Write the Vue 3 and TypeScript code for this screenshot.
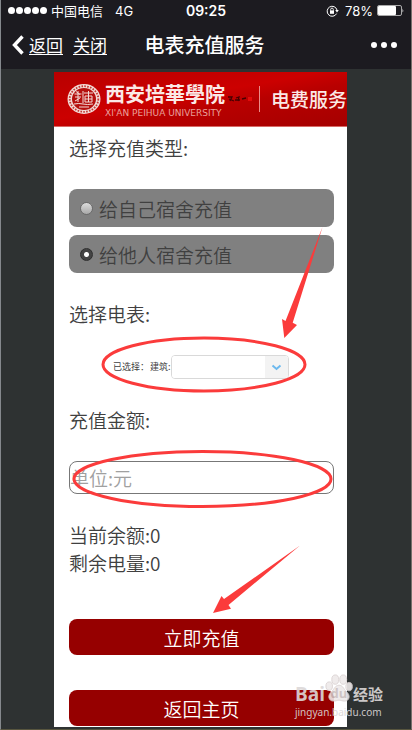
<script setup lang="ts">
import { ref } from 'vue'

interface RechargeTarget {
  value: string
  label: string
}

const targets: RechargeTarget[] = [
  { value: 'self', label: '给自己宿舍充值' },
  { value: 'other', label: '给他人宿舍充值' },
]

const target = ref('other')
const building = ref('')
const amount = ref('')
const balance = ref(0)
const remaining = ref(0)
</script>

<template>
  <div class="phone">
    <header class="top">
      <div class="status">
        <div class="carrier">
          <span class="signal"><i v-for="n in 5" :key="n"></i></span>
          <span>中国电信</span>
          <span class="network">4G</span>
        </div>
        <strong class="clock">09:25</strong>
        <div class="power">
          <svg class="lock" viewBox="0 0 13 12" aria-hidden="true">
            <path d="M10.6 8.6A5 5 0 1 1 11 5" fill="none" stroke="#fff" stroke-width="1" />
            <path d="M9.2 5h3.6L11 7.4z" fill="#fff" />
            <path d="M4 5.4h4v3.4H4z" fill="#fff" />
            <path d="M4.7 5.6V4.4a1.3 1.3 0 0 1 2.6 0v1.2" fill="none" stroke="#fff" stroke-width=".9" />
          </svg>
          <span>78%</span>
          <svg class="battery" viewBox="0 0 27 11" aria-hidden="true">
            <rect x=".5" y=".5" width="24" height="10" rx="1.5" fill="none" stroke="#aaa" />
            <rect x="1" y="1" width="18" height="9" rx="1" fill="#fff" />
            <path d="M25.5 3.5q1.5 2 0 4z" fill="#ddd" />
          </svg>
        </div>
      </div>
      <nav class="nav">
        <div class="links">
          <svg class="back" viewBox="0 0 12 20" aria-hidden="true">
            <path d="M10.5 1.5L2.5 10l8 8.5" fill="none" stroke="#fff" stroke-width="3.4" />
          </svg>
          <a href="#back">返回</a>
          <a href="#close">关闭</a>
        </div>
        <h1>电表充值服务</h1>
        <button class="more" type="button" aria-label="更多"><i></i><i></i><i></i></button>
      </nav>
    </header>

    <main class="stage">
      <form class="page" @submit.prevent>
        <div class="banner">
          <svg class="seal" viewBox="0 0 34 32" aria-hidden="true">
            <ellipse cx="17" cy="16" rx="16.5" ry="15" fill="#f3dcd8" />
            <ellipse cx="17" cy="16" rx="14.3" ry="12.8" fill="none" stroke="#c33a35" stroke-width="1.8" stroke-dasharray="1.6 1.3" />
            <ellipse cx="17" cy="16" rx="12" ry="11" fill="#b5100e" />
            <path
              d="M7.5 11h7M8 14h6M11 8v11M8 18l5-3M9 8.500l4 3M17 10h9M18 13h7v6h-7zM18 16h7M21.500 8v11M16 8v12M7 21q5-1 9 0t10 0M12 24h10"
              fill="none"
              stroke="#f3dcd8"
              stroke-width="1"
            />
          </svg>
          <div class="school">
            <span class="cn">西安培華學院</span>
            <span class="en">XI'AN PEIHUA UNIVERSITY</span>
          </div>
          <svg class="campus" viewBox="0 0 26 6" aria-hidden="true">
            <path d="M1 1l4 0-2 4M2 3l5 2M9 2l3-1-1 4M8 4h5M15 3l4-1" fill="none" stroke="#450000" stroke-width="1.3" />
            <path d="M21 1h4v4h-4z" fill="#e20b0b" />
          </svg>
          <span class="service">电费服务</span>
        </div>

        <fieldset class="section">
          <legend>选择充值类型:</legend>
          <div class="options">
            <label v-for="item in targets" :key="item.value" class="option">
              <input v-model="target" type="radio" name="target" :value="item.value" />
              <span>{{ item.label }}</span>
            </label>
          </div>
        </fieldset>

        <section class="section">
          <h2>选择电表:</h2>
          <div class="meter">
            <span>已选择：</span>
            <label for="building">建筑:</label>
            <span class="picker">
              <select id="building" v-model="building">
                <option value=""></option>
              </select>
              <svg viewBox="0 0 23 22" aria-hidden="true">
                <path d="M7.500 9.500l4 3.500 4-3.500" fill="none" stroke="#6db9ee" stroke-width="2" />
              </svg>
            </span>
          </div>
        </section>

        <section class="section">
          <label class="title" for="amount">充值金额:</label>
          <input id="amount" v-model="amount" class="amount" type="text" placeholder="单位:元" />
        </section>

        <section class="account">
          <p>当前余额:{{ balance }}</p>
          <p>剩余电量:{{ remaining }}</p>
        </section>

        <div class="actions">
          <button type="submit">立即充值</button>
          <button type="button">返回主页</button>
        </div>
      </form>
    </main>

    <svg class="marks" width="412" height="730" viewBox="0 0 412 730" aria-hidden="true">
      <g fill="none" stroke="#fb3b3b" stroke-width="3">
        <ellipse cx="204" cy="364.500" rx="101" ry="26.500" />
        <ellipse cx="202.500" cy="479" rx="128.500" ry="27.500" />
      </g>
      <g fill="#fb3b3b">
        <path d="M322.500 227L285.500 321 282 319l2.300 19L297 325l-4.300-2.300z" />
        <path d="M300 545.500L224 599l-2.500-3L213 613l18-4.300-2.500-3.700z" />
      </g>
    </svg>

    <div class="watermark">
      <div class="brand">
        <span class="latin">Bai</span>
        <span class="paw">
          <svg viewBox="0 0 30 30" aria-hidden="true">
            <g fill="currentColor" stroke="#d8d0d0" stroke-width="1">
              <ellipse cx="4.500" cy="13" rx="3.500" ry="4.500" />
              <ellipse cx="11" cy="6" rx="3.700" ry="5" />
              <ellipse cx="19.500" cy="6" rx="3.700" ry="5" />
              <ellipse cx="25.800" cy="13.500" rx="3.500" ry="4.500" />
              <path d="M15 12c4 0 5 4 8 7 5 4 3 10-2 10-3 0-4-1-6-1s-3 1-6 1c-5 0-7-6-2-10 3-3 4-7 8-7z" />
            </g>
          </svg>
          <span>du</span>
        </span>
        <span class="jy">经验</span>
      </div>
      <div class="site">jingyan.baidu.com</div>
    </div>
  </div>
</template>

<style>
body {
  margin: 0;
}
</style>

<style scoped>
.phone {
  position: relative;
  box-sizing: border-box;
  min-height: 100vh;
  overflow: hidden;
  display: flex;
  flex-direction: column;
  border-left: 1px solid #85898d;
  border-right: 1px solid #77706c;
  border-bottom: 1px solid #58563f;
  background: #2e3232;
  color: #404040;
  font-family: "Noto Sans CJK SC", sans-serif;
  font-weight: 350;
}

.top {
  background: #1c1b20;
  color: #fff;
  font-weight: 400;
}

.status,
.nav {
  display: grid;
  grid-template-columns: 1fr auto 1fr;
  align-items: center;
}

.status {
  height: 21px;
  padding: 0 7px;
  font-size: 13px;
  line-height: 20px;
}

.carrier,
.power {
  display: flex;
  align-items: center;
}

.carrier {
  gap: 4px;
}

.network {
  margin-left: 8px;
  font-family: Inter, sans-serif;
}

.signal {
  display: flex;
  gap: 1px;
}

.signal i {
  width: 7px;
  height: 7px;
  border-radius: 50%;
  background: #fff;
}

.clock {
  font-family: Inter, sans-serif;
  font-size: 14px;
  font-weight: 600;
}

.power {
  justify-content: flex-end;
  gap: 4px;
  font-family: Inter, sans-serif;
}

.lock {
  width: 13px;
  height: 12px;
  margin-right: 2px;
}

.battery {
  width: 27px;
  height: 11px;
}

.nav {
  height: 48px;
  padding: 0 14px 0 11px;
}

.links {
  display: flex;
  align-items: center;
}

.links a {
  color: #fff;
  font-size: 17px;
  line-height: 24px;
  text-underline-offset: 2px;
}

.links a + a {
  margin-left: 10px;
}

.back {
  width: 12px;
  height: 20px;
  margin-right: 5px;
}

.nav h1 {
  margin: 0;
  font-size: 20px;
  font-weight: 500;
  line-height: 28px;
}

.more {
  display: flex;
  gap: 4px;
  justify-self: end;
  padding: 8px 0;
  border: 0;
  background: none;
}

.more i {
  width: 6px;
  height: 6px;
  border-radius: 50%;
  background: #fff;
}

.stage {
  flex: 1;
  padding: 3px 64px 2px 53px;
}

.page {
  background: #fff;
  padding-bottom: 1px;
}

.banner {
  display: flex;
  align-items: center;
  box-sizing: border-box;
  height: 55px;
  padding-left: 13px;
  overflow: hidden;
  border-bottom: 1px solid #d76a66;
  background: linear-gradient(170deg, #b80000 0%, #cc0000 45%, #b80000 60%, #a50000 100%);
  color: #fbe9e6;
  white-space: nowrap;
}

.seal {
  flex: none;
  width: 34px;
  height: 32px;
}

.school {
  display: flex;
  flex-direction: column;
  width: 120px;
  margin-left: 4px;
}

.cn {
  font-size: 20px;
  font-weight: 700;
  line-height: 28px;
}

.en {
  color: #e9a09c;
  font-family: "DejaVu Sans", sans-serif;
  font-size: 9px;
  font-weight: 400;
  line-height: 10px;
}

.campus {
  flex: none;
  width: 26px;
  height: 6px;
  margin-left: 2px;
}

.service {
  margin-left: auto;
  padding-left: 11px;
  border-left: 1px solid #eb8c88;
  font-size: 19px;
  font-weight: 500;
  line-height: 26px;
}

.section,
.account,
.actions {
  margin: 0;
  padding: 0 13px 0 15px;
  border: 0;
  min-width: 0;
}

.section {
  padding-bottom: 27px;
}

.section legend,
.section h2,
.title,
.account p {
  display: block;
  margin: 0;
  padding: 0;
  font-size: 19px;
  font-weight: 350;
  line-height: 28px;
}

.section legend {
  padding-top: 7px;
}

.options {
  display: flex;
  flex-direction: column;
  gap: 8px;
  padding-top: 27px;
}

.option {
  display: flex;
  align-items: center;
  gap: 6px;
  height: 38px;
  padding-left: 11px;
  border-radius: 8px;
  background: #808080;
  font-size: 19px;
}

.option input {
  appearance: none;
  box-sizing: border-box;
  width: 13px;
  height: 13px;
  margin: 0;
  border: 1px solid #6a6a6a;
  border-radius: 50%;
  background: linear-gradient(#dcdcdc, #a8a8a8);
}

.option input:checked {
  border-color: #2e2e2e;
  background: radial-gradient(circle, #fff 0 2px, #444 3px);
}

.meter {
  display: flex;
  align-items: center;
  margin: 27px 0 0 44px;
  font-size: 9px;
  font-weight: 400;
  line-height: 24px;
}

.meter label {
  margin-left: 1px;
}

.picker {
  display: flex;
  position: relative;
  box-sizing: border-box;
  width: 118px;
  height: 24px;
  overflow: hidden;
  border: 1px solid #d9d9d9;
  border-radius: 4px;
}

.picker select {
  appearance: none;
  width: 100%;
  padding: 0 24px 0 4px;
  border: 0;
  background: #fff;
}

.picker svg {
  position: absolute;
  top: 0;
  right: 0;
  width: 23px;
  height: 22px;
  background: #f3f3f3;
  pointer-events: none;
}

.amount {
  box-sizing: border-box;
  display: block;
  width: 100%;
  height: 33px;
  margin-top: 27px;
  padding: 0;
  border: 1px solid #777;
  border-radius: 8px;
  background: #fff;
  color: #404040;
  font: inherit;
  font-size: 19px;
}

.amount::placeholder {
  color: #a0a0a0;
}

.actions {
  display: flex;
  flex-direction: column;
  gap: 35px;
  padding-top: 42px;
}

.actions button {
  height: 36px;
  padding: 0;
  border: 0;
  border-radius: 8px;
  background: #960000;
  color: #fff;
  font: inherit;
  font-size: 19px;
}

.marks {
  position: absolute;
  top: 0;
  left: -1px;
  pointer-events: none;
}

.watermark {
  position: absolute;
  right: 28px;
  bottom: 9px;
  color: #dcd8d8;
  opacity: 0.9;
  pointer-events: none;
}

.brand {
  display: flex;
  align-items: flex-end;
  height: 32px;
}

.latin {
  font-family: "Open Sans", sans-serif;
  font-size: 19px;
  font-weight: 700;
  line-height: 20px;
}

.paw {
  position: relative;
  width: 28px;
  height: 30px;
  color: #eee9e9;
}

.paw svg {
  width: 28px;
  height: 28px;
}

.paw span {
  position: absolute;
  inset: 12px 0 0;
  color: #c9bebe;
  font-family: "Open Sans", sans-serif;
  font-size: 13px;
  font-weight: 700;
  line-height: 14px;
  text-align: center;
}

.jy {
  font-size: 15px;
  font-weight: 700;
  line-height: 20px;
}

.site {
  font-family: "Noto Sans", sans-serif;
  font-size: 10px;
  font-weight: 400;
  line-height: 16px;
}
</style>
